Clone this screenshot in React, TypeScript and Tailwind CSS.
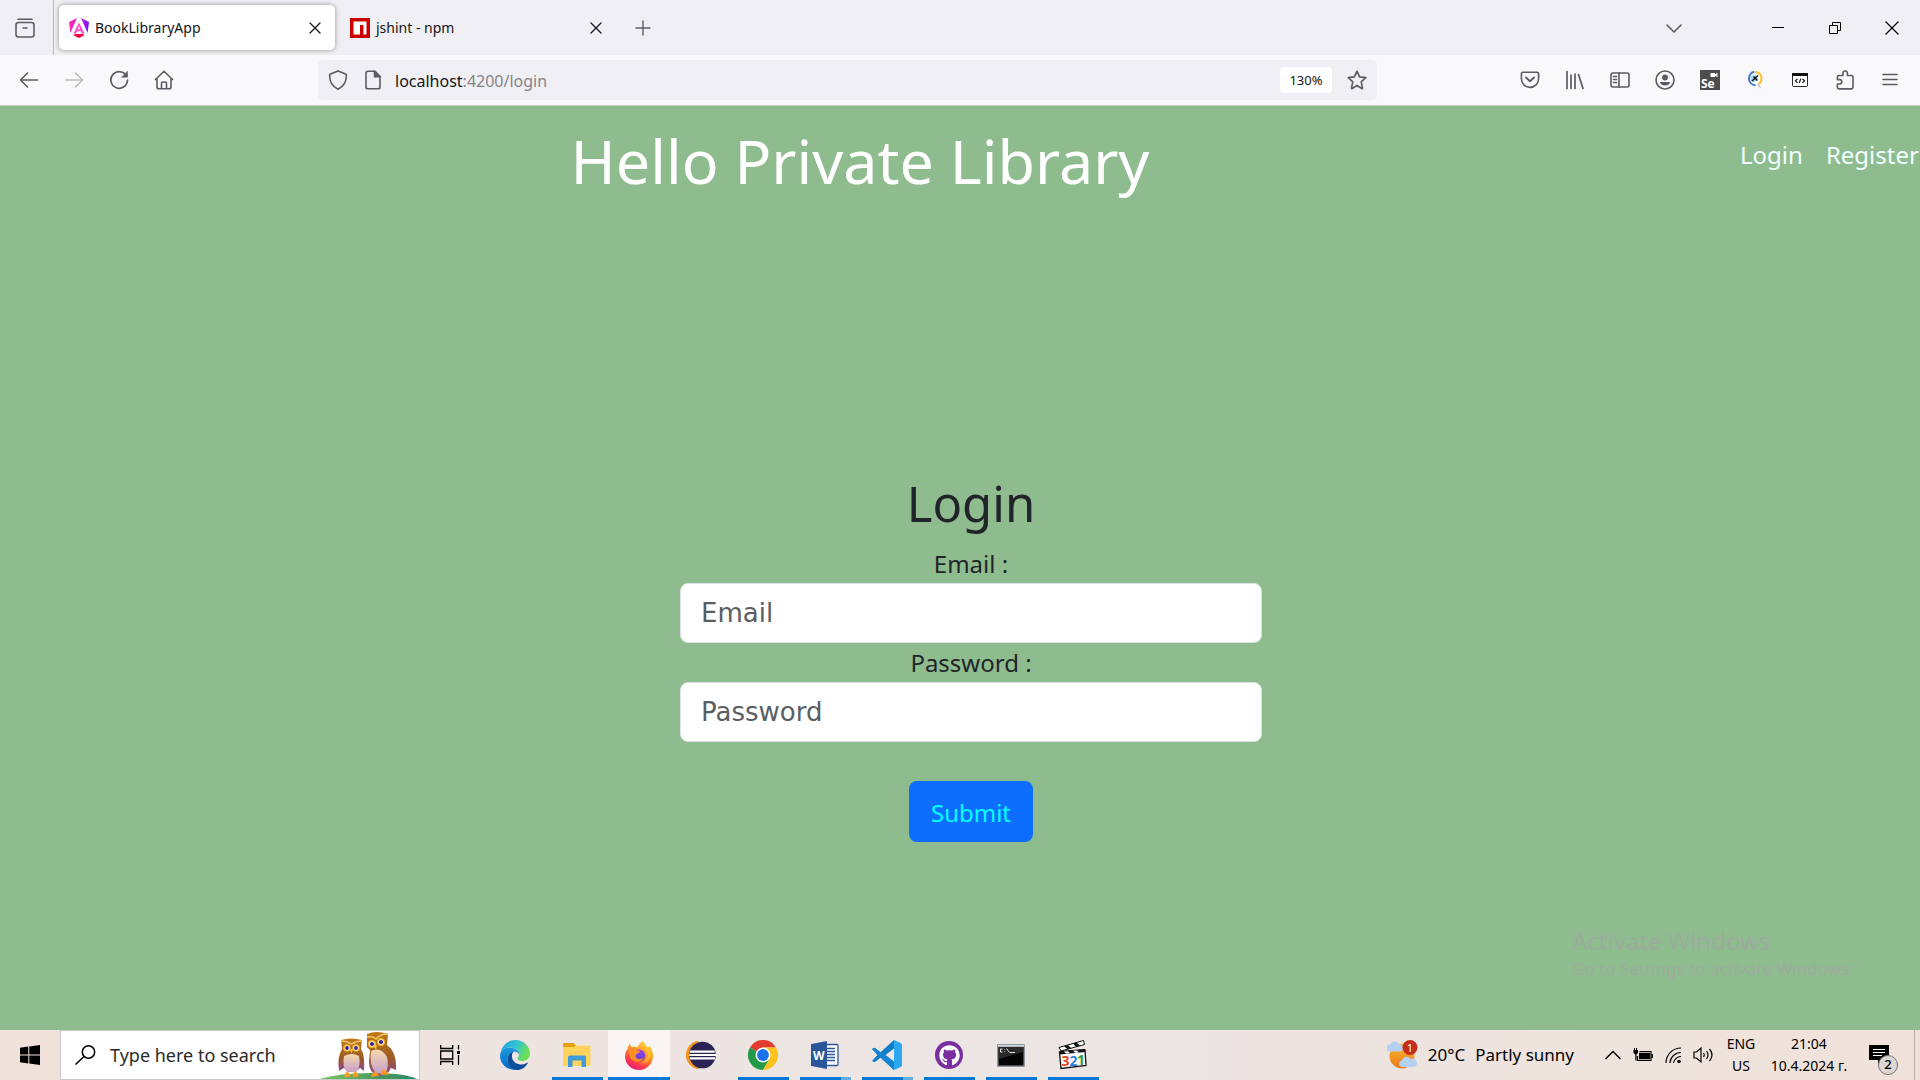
import type { ReactNode } from "react";
import { FaGithub } from "react-icons/fa";

const ui = "font-['Noto_Sans','Open_Sans',sans-serif]";

function Line({ children, size = 20, w = 1.6 }: { children: ReactNode; size?: number; w?: number }) {
  return (
    <svg width={size} height={size} viewBox="0 0 20 20" fill="none" stroke="currentColor" strokeWidth={w} strokeLinecap="round" strokeLinejoin="round" aria-hidden="true">
      {children}
    </svg>
  );
}

function AngularIcon() {
  return (
    <svg width="20" height="20" viewBox="0 0 20 20" aria-hidden="true">
      <defs>
        <linearGradient id="ng" x1="0" y1="0" x2="1" y2="0">
          <stop offset="0" stopColor="#ff2bb0" />
          <stop offset="0.5" stopColor="#e01be0" />
          <stop offset="1" stopColor="#7514f5" />
        </linearGradient>
      </defs>
      <path d="M0 4 8 0 1.4 15Z M20 4 12 0l6.600 15Z" fill="url(#ng)" />
      <path d="M10 4.500 4.500 15.500h2.600l1-2.300h3.800l1 2.300h2.600Z M10 8l1.200 3.200H8.800Z" fill="#ff4fc4" fillRule="evenodd" />
      <path d="M5.500 16h9l.6 1.600L10 20l-5.100-2.400Z" fill="#f5063f" />
    </svg>
  );
}

function NpmIcon() {
  return (
    <svg width="20" height="20" viewBox="0 0 20 20" aria-hidden="true">
      <rect width="20" height="20" fill="#cb0000" />
      <path d="M3.500 3.500h13v13h-3V7H10v9.500H3.500Z" fill="#fff" />
    </svg>
  );
}

function Tab({ title, icon, active }: { title: string; icon: ReactNode; active?: boolean }) {
  return (
    <div className={active ? "flex h-[45px] w-[276px] items-center rounded-[5px] bg-white pl-2.5 pr-2.5 shadow-[0_0_5px_rgba(0,0,0,0.4)]" : "flex h-[45px] w-[276px] items-center rounded-[5px] pl-2.5 pr-2.5"}>
      <button className="flex flex-1 items-center gap-1.5 text-left text-[14px] leading-5 text-[#15141a]">
        {icon}
        <span>{title}</span>
      </button>
      <button aria-label={`Close ${title}`} className="text-[#15141a]">
        <Line w={1.3}><path d="m5 5 10 10M15 5 5 15" /></Line>
      </button>
    </div>
  );
}

const slot = "flex h-full w-[45px] items-center justify-center";

function BrowserTabs() {
  return (
    <div className="flex h-[55px] items-center bg-[#f0f0f4] text-[#5b5b66]">
      <button aria-label="Firefox View" className="flex h-full w-[54px] items-center justify-center border-r border-[#b9b8bf] pr-1">
        <Line>
          <path d="M3 1.200h14" />
          <rect x="1" y="4.500" width="18" height="14.500" rx="2.500" />
          <path d="M8 10h4" />
        </Line>
      </button>
      <div className="ml-[5px] flex gap-[5px]">
        <Tab title="BookLibraryApp" icon={<AngularIcon />} active />
        <Tab title="jshint - npm" icon={<NpmIcon />} />
      </div>
      <button aria-label="New tab" className="ml-[17px]">
        <Line w={1.4}><path d="M10 3v14M3 10h14" /></Line>
      </button>
      <button aria-label="List all tabs" className="ml-auto flex w-[74px] justify-center">
        <Line><path d="m3 7 7 7 7-7" /></Line>
      </button>
      <div className="ml-[38px] flex h-full w-[171px] text-black">
        <button aria-label="Minimize" className="flex h-full flex-1 items-center justify-center">
          <svg width="12" height="12" aria-hidden="true"><path d="M0 5.500h12" stroke="currentColor" /></svg>
        </button>
        <button aria-label="Restore" className="flex h-full flex-1 items-center justify-center">
          <svg width="12" height="12" fill="none" stroke="currentColor" aria-hidden="true"><path d="M.5 3.500h8v8h-8zM3.500 3.500v-3h8v8h-3" /></svg>
        </button>
        <button aria-label="Close window" className="flex h-full flex-1 items-center justify-center">
          <svg width="14" height="14" stroke="currentColor" strokeWidth="1.200" aria-hidden="true"><path d="m.5.5 13 13m0-13-13 13" /></svg>
        </button>
      </div>
    </div>
  );
}

function Toolbar() {
  return (
    <div className="flex h-[51px] items-center border-b border-[#ccccd1] bg-[#f9f9fb] pl-1.5 pr-2 text-[#5b5b66]">
      <button aria-label="Back" className={slot}><Line><path d="M18.500 10H1.500M8.500 3l-7 7 7 7" /></Line></button>
      <button aria-label="Forward" disabled className={`${slot} text-[#bcbcc2]`}><Line><path d="M1.500 10h17M11.500 3l7 7-7 7" /></Line></button>
      <button aria-label="Reload" className={slot}>
        <Line w={1.7}><path d="M17.600 6.200A8.300 8.300 0 1 0 18.500 10" /><path d="M18.500 1.500v5.700h-5.700Z" fill="currentColor" strokeWidth="0.600" /></Line>
      </button>
      <button aria-label="Home" className={slot}>
        <Line><path d="M1.500 9.500 10 1.200l8.500 8.300M3 8.500V17q0 1.800 1.800 1.800h10.400Q17 18.800 17 17V8.500M7.500 18.500v-5q0-1.500 1.500-1.500h2q1.500 0 1.500 1.500v5" /></Line>
      </button>
      <div className="ml-[132px] mr-[130px] flex h-10 flex-1 items-center rounded-[5px] bg-[#f0f0f4] pl-2.5 pr-2.5">
        <button aria-label="Tracking protection">
          <Line><path d="M10 .9 17.500 4q.9.400.9 1.300C18.400 11 16 16.500 10 19.200 4 16.500 1.600 11 1.600 5.300q0-.9.900-1.300Z" /></Line>
        </button>
        <button aria-label="Site information" className="ml-[15px]">
          <Line><path d="M5 1.200h7l5 5V17q0 1.800-1.800 1.800H4.800Q3 18.800 3 17V3Q3 1.200 5 1.200Z" /><path d="M11.500 1.200v5.500H17Z" fill="currentColor" /></Line>
        </button>
        <a href="#login" className="ml-3 pt-0.5 text-base text-[#84838a]">
          <span className="text-[#15141a]">localhost</span>:4200/login
        </a>
        <button className="ml-auto h-[26px] w-[52px] rounded bg-white pt-px text-[13px] text-[#15141a]">130%</button>
        <button aria-label="Bookmark this page" className="ml-[15px]">
          <Line><path d="m10 1.200 2.600 5.700 6.200.7-4.600 4.200 1.300 6.200q.1.900-.7.500L10 15.500l-4.800 3q-.8.400-.7-.5l1.300-6.200L1.200 7.600l6.200-.7Z" /></Line>
        </button>
      </div>
      <button aria-label="Save to Pocket" className={slot}>
        <Line><path d="M3 2.200h14q1.600 0 1.600 1.600v5a8.600 8.600 0 0 1-17.200 0v-5Q1.400 2.200 3 2.200Z" /><path d="m6 7.500 4 3.800 4-3.800" strokeWidth="1.900" /></Line>
      </button>
      <button aria-label="Library" className={slot}><Line w={1.7}><path d="M2 1.500v17M6 5v13.500M10 4v14.500M13.500 4.500l4.500 14" /></Line></button>
      <button aria-label="Sidebars" className={slot}>
        <Line><rect x="1" y="3" width="18" height="14" rx="2" /><path d="M9 3v14M3.500 6.500h3M3.500 9.500h3M3.500 12.500h3" /></Line>
      </button>
      <button aria-label="Account" className={slot}>
        <Line><circle cx="10" cy="10" r="9" /><circle cx="10" cy="7.500" r="2.900" fill="currentColor" stroke="none" /><path d="M4.800 12h10.400q-1 3.500-5.200 3.500T4.800 12Z" fill="currentColor" stroke="none" /></Line>
      </button>
      <button aria-label="Selenium IDE" className={slot}>
        <svg width="20" height="20" viewBox="0 0 20 20" aria-hidden="true">
          <rect width="20" height="20" fill="#4d4d4d" />
          <path d="M10.500 3h4.500v1l2.500-1v4L15 6v1h-4.500Z" fill="#fff" />
          <text x="1" y="17.500" fontSize="12" fontWeight="700" fill="#fff" fontFamily="Open Sans, sans-serif">Se</text>
        </svg>
      </button>
      <button aria-label="Page inspector" className={slot}>
        <svg width="20" height="20" viewBox="0 0 20 20" fill="none" aria-hidden="true">
          <circle cx="10" cy="8.500" r="5.500" fill="#fff" />
          <path d="M9.300 1.700A6.900 6.900 0 0 0 10.500 15.300" stroke="#3c73cf" strokeWidth="2" />
          <path d="M10.500 1.700A6.900 6.900 0 0 1 13 14.500" stroke="#fbc02d" strokeWidth="2" />
          <path d="m13 14 2.500 4" stroke="#c5c5ca" strokeWidth="1.500" />
          <circle cx="9" cy="8.500" r="3.500" fill="#9fd8f8" />
          <path d="m7 11 6-5.500M8.500 6.500l4 4" stroke="#111" strokeWidth="1.500" />
        </svg>
      </button>
      <button aria-label="Web developer" className={slot}>
        <svg width="20" height="20" viewBox="0 0 20 20" fill="none" aria-hidden="true">
          <rect x="2.500" y="3.500" width="15" height="13" rx="1" fill="#fff" stroke="#2b2a33" />
          <path d="M2 3h16v3H2Z" fill="#111" />
          <path d="m7.500 8.800-2 2 2 2m5-4 2 2-2 2m-1.700-4.200-1.600 4.400" stroke="#111" strokeWidth="1.200" />
        </svg>
      </button>
      <button aria-label="Extensions" className={slot}>
        <Line><path d="M8 5.500V3.200a2.200 2.200 0 0 1 4.400 0v2.300h4q1.600 0 1.600 1.600v10.200q0 1.600-1.600 1.600H4q-1.600 0-1.600-1.600V14h2.200a2.200 2.200 0 0 0 0-4.400H2.400V7.100q0-1.600 1.600-1.600Z" /></Line>
      </button>
      <button aria-label="Application menu" className={slot}><Line><path d="M3 4.500h14M3 9.500h14M3 14.500h14" /></Line></button>
    </div>
  );
}

function Field({ id, label, type }: { id: string; label: string; type: string }) {
  return (
    <div className="flex flex-col items-center">
      <label htmlFor={id} className="pt-px text-2xl leading-[38px]">{label} :</label>
      <input id={id} type={type} placeholder={label} className="h-[60px] w-full rounded-lg border border-[#dee2e6] bg-white px-5 font-['DejaVu_Sans',sans-serif] text-[26px] placeholder:text-[#5a5e62]" />
    </div>
  );
}

function LibraryPage() {
  return (
    <div className="relative flex flex-1 flex-col bg-[#8fbc8f] text-[#212529]">
      <header className="flex items-start">
        <h1 className="flex-1 pt-4 text-center text-[61px] leading-[78px] text-white">Hello Private Library</h1>
        <nav className="flex w-[200px] gap-[23px] pl-5 pt-[31px] text-2xl leading-9 text-[#f0ffff]">
          <a href="#login">Login</a>
          <a href="#register">Register</a>
        </nav>
      </header>
      <main className="flex flex-1 items-center justify-center pl-[22px] pt-[84px]">
        <form className="flex w-[582px] flex-col" onSubmit={(e) => e.preventDefault()}>
          <h2 className="pb-2.5 text-center text-[49px] leading-[62px]">Login</h2>
          <Field id="email" label="Email" type="email" />
          <Field id="password" label="Password" type="password" />
          <button type="submit" className="mt-[39px] h-[61px] w-[124px] self-center rounded-lg bg-[#0d6efd] pt-0.5 text-2xl text-[#00ffff]">Submit</button>
        </form>
      </main>
      <div className="pointer-events-none absolute bottom-[49px] right-[60px] w-[288px] whitespace-nowrap text-[#9bac9c]">
        <p className="text-2xl leading-8">Activate Windows</p>
        <p className="text-[17px] leading-6">Go to Settings to activate Windows.</p>
      </div>
    </div>
  );
}

function Owls() {
  return (
    <svg width="100" height="48" viewBox="0 0 100 48" aria-hidden="true">
      <defs>
        <linearGradient id="owl" x1="0" y1="0" x2="0" y2="1">
          <stop offset="0" stopColor="#c07a14" />
          <stop offset="0.600" stopColor="#9c5a26" />
          <stop offset="1" stopColor="#8d4aa0" />
        </linearGradient>
        <linearGradient id="belly" x1="0" y1="0" x2="0" y2="1">
          <stop offset="0" stopColor="#f5d9ae" />
          <stop offset="1" stopColor="#c8a0c8" />
        </linearGradient>
        <linearGradient id="hill" x1="0" y1="0" x2="1" y2="0">
          <stop offset="0" stopColor="#7cc46a" />
          <stop offset="0.600" stopColor="#4b9a5a" />
          <stop offset="1" stopColor="#2b8a6c" />
        </linearGradient>
      </defs>
      <path d="M0 48Q20 42 52 42q34 0 46 6Z" fill="url(#hill)" />
      <path d="M22 9q10-3 21 0l-1 9q4 6 3 22l-4-3q-8 8-16 0l-5 3q-2-14 3-22Z" fill="url(#owl)" />
      <path d="M25 25q8-4 15 0 2 12-3 16h-9q-5-5-3-16Z" fill="url(#belly)" />
      <path d="M48 3q9-4 21 0l-1 11q10 7 9 25l-5-2q-4 9-13 8-9-3-9-14l1-12-3-3Z" fill="url(#owl)" />
      <path d="M52 20q10-5 16 6 2 9-1 15-6 3-11 0-6-8-4-21Z" fill="url(#belly)" />
      <g fill="#f0b41e">
        <circle cx="28" cy="17" r="3.800" /><circle cx="37" cy="17" r="3.800" />
        <circle cx="53" cy="13" r="4" /><circle cx="62" cy="11" r="4" />
      </g>
      <g fill="#fff">
        <circle cx="28" cy="17" r="2.500" /><circle cx="37" cy="17" r="2.500" />
        <circle cx="53" cy="13" r="2.700" /><circle cx="62" cy="11" r="2.700" />
      </g>
      <g fill="#3c1e92">
        <circle cx="28" cy="17" r="1.900" /><circle cx="37" cy="17" r="1.900" />
        <circle cx="53" cy="13" r="2.100" /><circle cx="62" cy="11" r="2.100" />
      </g>
      <path d="M22 10q6 0 10.500 3Q37 10 43 10M48 6q6-1 9 2 4-5 12-5" fill="none" stroke="#f2c868" strokeWidth="1.500" />
      <path d="M31 18h3l-1.500 4.500ZM55 15l3-1-1 5Z" fill="#ffc91a" />
      <path d="m26 45 2-4 3 4Zm8 0 2-4 3 4ZM53 45l3-4 3 3Zm9-2 3-4 4 4Z" fill="#ff9a22" stroke="#ff9a22" strokeLinejoin="round" strokeWidth="1.500" />
    </svg>
  );
}

function Edge() {
  return (
    <svg width="30" height="30" viewBox="0 0 30 30" aria-hidden="true">
      <defs>
        <linearGradient id="e1" x1="0" y1="0" x2="1" y2="0.400"><stop offset="0" stopColor="#1c9de0" /><stop offset="0.550" stopColor="#35c5d2" /><stop offset="1" stopColor="#6ee052" /></linearGradient>
        <linearGradient id="e2" x1="0" y1="0" x2="0" y2="1"><stop offset="0" stopColor="#1a9be0" /><stop offset="1" stopColor="#0864c4" /></linearGradient>
      </defs>
      <path d="M1 11.500C3 4 9 0 15.500 0 24 0 30 6.500 30 13.500c0 5-4 7.500-8 7.500-3.500 0-5-1.500-4.500-3 1-1 1.500-2 1.500-3.200C19 10 14 7.500 9.500 7.500 5.500 7.500 2.500 9.500 1 11.500Z" fill="url(#e1)" />
      <path d="M0 15.500C0 10.500 4.500 7.500 9.500 7.500c5 0 9.500 3 9.500 7-1-2-3-3-5-3-4 0-6.500 4-6.500 8 0 5.500 4.500 9.500 9.500 10.400C8 31 0 24.500 0 15.500Z" fill="url(#e2)" />
      <path d="M12 15.500c-.5 5.500 4 9 9 9 2.500 0 4.500-.8 6-1.800.5-.3 1 0 .6.700C25.500 27 21.500 30 17 30 11.500 29.500 7.500 25 7.500 19.500c0-4 2.500-8 6.500-8-1.200 1-2 2.300-2 4Z" fill="#0c4e9c" />
    </svg>
  );
}

function Folder() {
  return (
    <svg width="28" height="24" viewBox="0 0 28 24" aria-hidden="true">
      <path d="M0 1.500Q0 0 1.500 0h9l2.500 2.500V8H0Z" fill="#e3a008" />
      <path d="M0 4h11l2-1.500h13q1.500 0 1.500 1.500v17.500q0 1.500-1.500 1.500H1.500Q0 23 0 21.500Z" fill="#ffd35c" />
      <path d="M5 24V14q0-1.500 1.500-1.500h15Q23 12.500 23 14v10h-4.500v-6.500h-9V24Z" fill="#3f9ad8" />
    </svg>
  );
}

function Firefox() {
  return (
    <svg width="28" height="29" viewBox="0 0 28 29" aria-hidden="true">
      <defs>
        <linearGradient id="f1" x1="0.800" y1="0" x2="0.250" y2="1"><stop offset="0" stopColor="#ffe23a" /><stop offset="0.450" stopColor="#ff8a22" /><stop offset="0.780" stopColor="#ff3750" /><stop offset="1" stopColor="#e31587" /></linearGradient>
        <linearGradient id="f2" x1="0" y1="0" x2="0" y2="1"><stop offset="0" stopColor="#9a44e8" /><stop offset="1" stopColor="#5a3fd0" /></linearGradient>
      </defs>
      <path d="M5 2.500c.2 1.700 1 3 2 3.800C9 5.600 11 5.800 12.500 6.500 13.500 3.500 15.500 1 18.500 0c.2 3 2 4.300 4 6.300 1-.2 1.600-.8 1.700-1.800C27 7.500 28 11.500 28 15c0 8-6.300 14-14 14S0 23 0 15.500C0 11 2 8.500 3 7.500c0-2 .8-4 2-5Z" fill="url(#f1)" />
      <circle cx="14.200" cy="14.500" r="6" fill="url(#f2)" />
      <path d="M4 8c3-1.500 5.500-.5 7 1.200 2 .3 3.500.3 4 1-.4 1.500-2.500 2-3.600 2.700-.9.700-.5 1.800-.9 2.700 1 3 4.500 3.500 8 1-1 4-6.500 5.500-10.500 3C4.500 17.500 3 12.500 4 8Z" fill="#ff9024" />
      <path d="M18.500 0c-2.500 4.500 3.500 7.500 4 13 .3 5-3 8.500-7.500 9 7 1 11-4 10.500-9C25 6.500 19 4.500 18.500 0Z" fill="#ffc52d" opacity="0.800" />
    </svg>
  );
}

function Eclipse() {
  return (
    <svg width="30" height="28" viewBox="0 0 30 28" aria-hidden="true">
      <path d="M12 .3A13.900 13.900 0 0 0 12 27.700L9 25A14.500 14.500 0 0 1 9 3Z" fill="#f7941e" stroke="#f7941e" strokeWidth="1.200" />
      <circle cx="16.500" cy="14" r="13.300" fill="#2c2255" />
      <path d="M4.200 9.500h24.500v2.200h-25zM3.200 13H30v2H3.200zM3.700 16.300h25.300v2.200H4.200z" fill="#fff" />
    </svg>
  );
}

function Chrome() {
  return (
    <svg width="30" height="30" viewBox="0 0 30 30" aria-hidden="true">
      <path d="M15 15 2 7.500A15 15 0 0 1 28 7.500H15Z" fill="#e33b2e" />
      <path d="M15 15 2 7.500A15 15 0 0 0 15 30l6.500-11.200Z" fill="#229a48" />
      <path d="M15 15v-7.500h13A15 15 0 0 1 15 30l6.500-11.200Z" fill="#fcc31e" />
      <circle cx="15" cy="15" r="7.500" fill="#fff" />
      <circle cx="15" cy="15" r="5.900" fill="#1a73e8" />
    </svg>
  );
}

function Word() {
  return (
    <svg width="28" height="28" viewBox="0 0 28 28" aria-hidden="true">
      <rect x="13" y="3.500" width="14" height="21" rx="1" fill="#fff" stroke="#2b579a" strokeWidth="1.300" />
      <path d="M15 7.500h9M15 10.500h9M15 13.500h9M15 16.500h9M15 19.500h9" stroke="#2b579a" strokeWidth="1.400" />
      <path d="M0 3 16 0v28L0 25Z" fill="#2b579a" />
      <text x="2" y="18.500" fontSize="12" fontWeight="700" fill="#fff" fontFamily="Open Sans, sans-serif">W</text>
    </svg>
  );
}

function VsCode() {
  return (
    <svg width="30" height="30" viewBox="0 0 30 30" aria-hidden="true">
      <path d="M22 0 8.500 12.300 2.500 7.700 0 9l5.500 6L0 21l2.500 1.300 6-4.600L22 30v-8.500L13.500 15 22 8.500Z" fill="#0f7cc6" />
      <path d="M2.500 7.700 22 22v8L0 9Z" fill="#1387d3" />
      <path d="m22 0 6.500 3Q30 3.700 30 5v20q0 1.300-1.500 2L22 30Z" fill="#2aa8f2" />
    </svg>
  );
}

function GithubDesktop() {
  return (
    <span className="flex size-7 items-center justify-center rounded-full bg-[#7a2ea0] text-white">
      <FaGithub size={21} aria-hidden="true" />
    </span>
  );
}

function Cmd() {
  return (
    <svg width="28" height="23" viewBox="0 0 28 23" aria-hidden="true">
      <rect width="28" height="23" rx="1" fill="#8f979e" />
      <path d="M1 1h26v1.500H1Z" fill="#d5dbe0" />
      <path d="M1.500 3h25v18.500h-25Z" fill="#050505" />
      <path d="M1.500 3h25v5L1.500 15Z" fill="#2a2a2a" />
      <path d="M5.500 5h-2v3h2M7.500 5.500v.5M7.500 7.500V8M9.500 4.500l3 4M13 8.500h5" fill="none" stroke="#e8e8e8" />
    </svg>
  );
}

function MediaPlayer() {
  return (
    <svg width="30" height="30" viewBox="0 0 30 30" aria-hidden="true">
      <path d="M1 7.500 25.500.5l1 4L3 11Z" fill="#fff" stroke="#111" />
      <path d="m6 6 3.500 3.300 4-1L9.500 5Zm9-2.500 3 3.300 4-1-3.500-3.300Z" fill="#111" />
      <path d="m1.500 12 25.500-2 1 15.500-25 3Z" fill="#fff" stroke="#111" strokeWidth="1.300" />
      <path d="m1.500 11 25.500-2 .2 3L1.800 14.500Z" fill="#111" />
      <path d="m6 11.500 2 2 4-.3-2-2Zm9-.7 2 2 4-.3-2-2Z" fill="#fff" />
      <g fontSize="14" fontWeight="700" fontFamily="Open Sans, sans-serif">
        <text x="3.500" y="26" fill="#d9481c">3</text>
        <text x="11.500" y="25.500" fill="#2e7fd8">2</text>
        <text x="19" y="25" fill="#2c9a2c">1</text>
      </g>
    </svg>
  );
}

type AppState = "idle" | "open" | "active" | "multi";

const apps: { name: string; icon: ReactNode; state: AppState }[] = [
  { name: "Microsoft Edge", icon: <Edge />, state: "idle" },
  { name: "File Explorer", icon: <Folder />, state: "open" },
  { name: "Firefox", icon: <Firefox />, state: "active" },
  { name: "Eclipse", icon: <Eclipse />, state: "idle" },
  { name: "Google Chrome", icon: <Chrome />, state: "open" },
  { name: "Word", icon: <Word />, state: "multi" },
  { name: "Visual Studio Code", icon: <VsCode />, state: "multi" },
  { name: "GitHub Desktop", icon: <GithubDesktop />, state: "open" },
  { name: "Command Prompt", icon: <Cmd />, state: "open" },
  { name: "Media Player Classic", icon: <MediaPlayer />, state: "open" },
];

function TaskbarApp({ name, icon, state }: { name: string; icon: ReactNode; state: AppState }) {
  return (
    <button aria-label={name} className={state === "active" ? "flex w-[62px] flex-col items-center bg-[#f8f5f4]" : "flex w-[62px] flex-col items-center"}>
      <span className="flex flex-1 items-center pt-[3px]">{icon}</span>
      <span className={state === "active" ? "flex h-[3px] w-full" : "flex h-[3px] w-[51px]"}>
        {state !== "idle" && <span className="flex-1 bg-[#0078d7]" />}
        {state === "multi" && <span className="w-2.5 bg-[#64aee8]" />}
      </span>
    </button>
  );
}

const tray = "flex w-[30px] items-center justify-center";

function Taskbar() {
  return (
    <footer className="flex h-[50px] items-stretch bg-linear-to-r from-[#f0e1da] via-[#ece6e4] to-[#f0e2da] text-black">
      <button aria-label="Start" className="flex w-[60px] items-center justify-center">
        <svg width="20" height="20" viewBox="0 0 20 20" aria-hidden="true"><path d="M0 2.700 8.300 1.500v8H0ZM9.300 1.400 20 0v9.500H9.300ZM0 10.500h8.300v8L0 17.300ZM9.300 10.500H20V20L9.300 18.600Z" /></svg>
      </button>
      <div className="flex w-[360px] items-center border border-[#c9c9c9] bg-white pl-3.5">
        <svg width="21" height="20" viewBox="0 0 21 20" fill="none" stroke="#000" strokeWidth="1.500" aria-hidden="true"><circle cx="13.500" cy="7" r="6.200" /><path d="M9 11.500.5 19.500" /></svg>
        <input aria-label="Search" placeholder="Type here to search" className="ml-3.5 w-0 flex-1 text-lg placeholder:text-[#2b2b2b]" />
        <Owls />
      </div>
      <button aria-label="Task view" className="mr-1 flex w-[60px] items-center justify-center">
        <svg width="21" height="20" viewBox="0 0 21 20" fill="none" stroke="#000" strokeWidth="1.300" aria-hidden="true"><path d="M.7 0v3.500h12V0M.7 20v-3.500h12V20M.7 6h12v8H.7ZM18.500 0v4.500M18.500 10v10" /><path d="M17 6h3v3h-3Z" fill="#000" stroke="none" /></svg>
      </button>
      {apps.map((a) => <TaskbarApp key={a.name} {...a} />)}
      <button className="ml-auto mr-6 flex items-center gap-2.5 text-[17px]">
        <svg width="31" height="30" viewBox="0 0 31 30" aria-hidden="true">
          <defs><linearGradient id="sun" x1="0" y1="0" x2="0" y2="1"><stop offset="0" stopColor="#f6b82a" /><stop offset="1" stopColor="#ee7a1c" /></linearGradient></defs>
          <circle cx="15" cy="16" r="12.500" fill="url(#sun)" />
          <path d="M3 11.500a3.500 3.500 0 0 1 0-7A5 5 0 0 1 12 4a4 4 0 0 1 2 7.500Z" fill="#b5d0f5" />
          <path d="M15 27a3.300 3.300 0 0 1 0-6.500 5 5 0 0 1 9-1.500 4 4 0 0 1 3.500 8Z" fill="#b5d0f5" />
          <circle cx="23" cy="7.500" r="7.500" fill="#c42b1c" />
          <text x="23" y="11.500" fontSize="11" textAnchor="middle" fill="#fff" fontFamily="Noto Sans, sans-serif">1</text>
        </svg>
        <span>20°C</span>
        <span>Partly sunny</span>
      </button>
      <button aria-label="Show hidden icons" className={tray}><svg width="16" height="10" fill="none" stroke="#000" strokeWidth="1.400" aria-hidden="true"><path d="m.5 9 7.500-7.500L15.500 9" /></svg></button>
      <button aria-label="Battery" className={tray}>
        <svg width="20" height="14" viewBox="0 0 20 14" aria-hidden="true"><path d="M6.500 3.500h11.500v9H4.500V8" fill="none" stroke="#000" strokeWidth="1.200" /><path d="M6 4.800h11v6.500H6ZM18.500 6H20v4h-1.500ZM1 0h1v2h1V0h1v2h1v3L3.500 6.500v6H2.300v-6L.5 5V2H1Z" /></svg>
      </button>
      <button aria-label="Wi-Fi" className={tray}>
        <svg width="17" height="17" viewBox="0 0 17 17" fill="none" stroke="#000" strokeWidth="1.200" aria-hidden="true"><path d="M1 16A15 15 0 0 1 16 1M5 16A11 11 0 0 1 16 5.500M8.500 16a7.500 7.500 0 0 1 7.500-6.500" /><circle cx="14" cy="14.500" r="1.800" fill="#000" stroke="none" /></svg>
      </button>
      <button aria-label="Volume" className={tray}>
        <svg width="21" height="18" viewBox="0 0 21 18" fill="none" stroke="#000" strokeWidth="1.200" aria-hidden="true"><path d="M1 6h2.500L8 2v14l-4.500-4H1ZM10.500 7q1.500 2 0 4M13.500 5q3 4 0 8M16.500 3q5 6 0 12" /></svg>
      </button>
      <button className="flex w-[46px] flex-col items-center justify-center text-[14px] leading-[22px]"><span>ENG</span><span>US</span></button>
      <button className="flex w-[90px] flex-col items-center justify-center whitespace-nowrap text-[14px] leading-[22px]"><span>21:04</span><span>10.4.2024 г.</span></button>
      <button aria-label="Notifications, 2 new" className="relative flex w-[60px] items-center justify-center">
        <svg width="30" height="20" viewBox="0 0 30 20" aria-hidden="true"><path d="M0 0h20v15h-6l-5 4v-4H0Z" /><path d="M4 4.500h12M4 7.500h12M4 10.500h9" stroke="#fff" strokeWidth="1.200" /></svg>
        <span className="absolute left-[24px] top-[25px] flex size-5 items-center justify-center rounded-full border border-[#77716d] bg-[#dcd7d4] text-[13px] font-medium">2</span>
      </button>
      <div className="w-1.5 border-l border-[#b5aca8]" />
    </footer>
  );
}

export default function App() {
  return (
    <div className={`flex min-h-screen flex-col overflow-hidden ${ui}`}>
      <BrowserTabs />
      <Toolbar />
      <LibraryPage />
      <Taskbar />
    </div>
  );
}
